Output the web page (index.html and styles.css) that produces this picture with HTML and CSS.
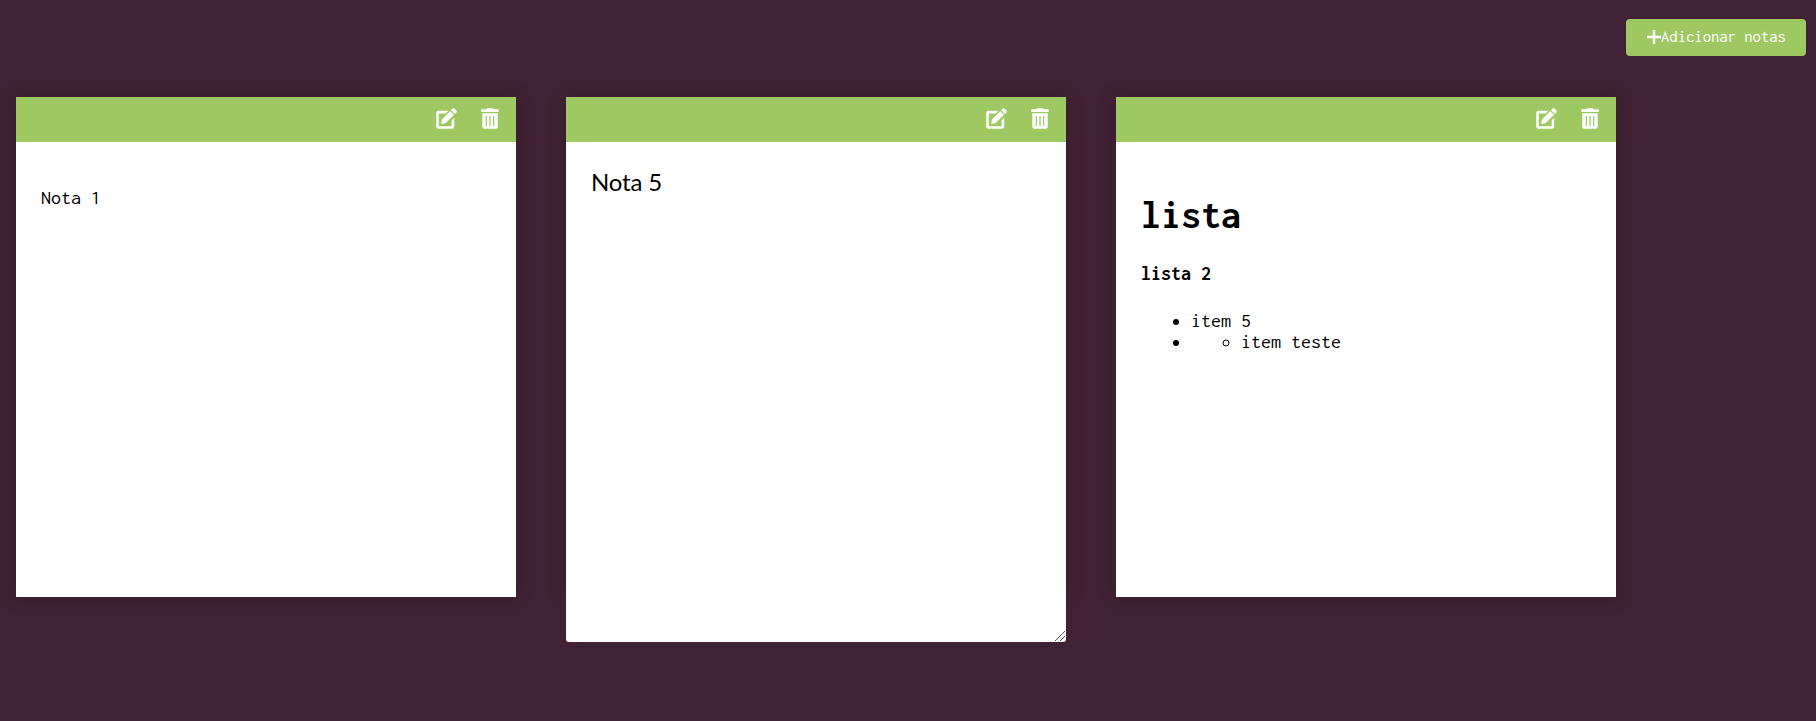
FILE: index.html
```html
<!DOCTYPE html>
<html lang="pt-BR">
<head>
<meta charset="utf-8">
<title>Notas</title>
<link rel="stylesheet" href="styles.css">
</head>
<body>
<svg class="sprite" aria-hidden="true">
  <symbol id="edit" viewBox="0 0 21 21">
    <path d="M12.200 2.800H2.500A2.300 2.300 0 0 0 .2 5.100v13.400a2.300 2.300 0 0 0 2.300 2.300h13.400a2.300 2.300 0 0 0 2.300-2.300V9.800l-2.600 2.600V18.200H2.800V5.400h6.800z"/>
    <path d="M14.200 2.900 18 6.700 9.400 15.200 5.200 16l.7-4.600zM15 2.100l1.500-1.500q1-.8 2 0l1.900 1.900q.8 1 0 2L18.900 6z"/>
  </symbol>
  <symbol id="trash" viewBox="0 0 18 21">
    <path fill-rule="evenodd" d="M5.400 1.300 6.200.2h5.600l.8 1.100H17q.8 0 .8.800v1.200q0 .7-.8.700H1q-.8 0-.8-.7V2.100q0-.8.8-.8zM1.300 5.200h15.400v13.500a2 2 0 0 1-2 2H3.300a2 2 0 0 1-2-2zM4.700 8v10h1.200V8zm3.700 0v10h1.200V8zm3.700 0v10h1.200V8z"/>
  </symbol>
</svg>
<button class="add"><svg class="plus" viewBox="0 0 14 14"><path d="M5.800 0h2.400v5.800H14v2.400H8.200V14H5.800V8.200H0V5.800h5.800z"/></svg>Adicionar notas</button>
<main class="notes">
  <section class="note">
    <header class="tools"><svg class="edit"><use href="#edit"/></svg><svg class="trash"><use href="#trash"/></svg></header>
    <div class="content"><p>Nota 1</p></div>
  </section>
  <section class="note">
    <header class="tools"><svg class="edit"><use href="#edit"/></svg><svg class="trash"><use href="#trash"/></svg></header>
    <div class="editor-wrap">
      <textarea class="editor" spellcheck="false">Nota 5</textarea>
      <svg class="grip" viewBox="0 0 10 10"><path d="M0 10 10 0M5 10l5-5"/></svg>
    </div>
  </section>
  <section class="note">
    <header class="tools"><svg class="edit"><use href="#edit"/></svg><svg class="trash"><use href="#trash"/></svg></header>
    <div class="content">
      <h1>lista</h1>
      <h4>lista 2</h4>
      <ul><li>item 5</li><li><ul><li>item teste</li></ul></li></ul>
    </div>
  </section>
</main>
</body>
</html>
```
FILE: styles.css
```css
* { box-sizing: border-box; }
body {
  margin: 0;
  padding-top: 19px;
  height: 721px;
  overflow: hidden;
  background: #412234;
  color: #000;
  font: 20px/21px Inconsolata, "Liberation Mono", monospace;
}
.sprite { display: none; }
.add {
  display: flex;
  align-items: center;
  width: 180px;
  height: 37px;
  margin: 0 10px 41px auto;
  padding: 0 0 1px 21px;
  border: 0;
  border-radius: 4px;
  background: #9ec862;
  color: #fff;
  font: 16.67px/18px Inconsolata, "Liberation Mono", monospace;
  white-space: nowrap;
}
.plus { width: 14px; height: 14px; flex: none; fill: #fff; }
.notes { display: flex; align-items: flex-start; gap: 50px; padding-left: 16px; }
.note {
  width: 500px;
  height: 500px;
  background: #fff;
  box-shadow: 0 0 15px 4px rgba(0, 0, 0, .1);
}
.tools {
  display: flex;
  justify-content: flex-end;
  align-items: center;
  gap: 24px;
  height: 45px;
  padding: 0 17px 2px 0;
  background: #9ec862;
  fill: #fff;
}
.edit { width: 21px; height: 21px; }
.trash { width: 18px; height: 21px; }
.content { padding: 25px; }
.content p { margin: 20px 0; }
.content h1 { margin: 26.8px 0; font-size: 40px; line-height: 42px; }
.content h4 { margin: 26.6px 0; }
.content ul { margin: 20px 0; padding-left: 50px; }
.content ul ul { margin: 0; }
.editor-wrap { position: relative; }
.editor {
  display: block;
  width: 500px;
  height: 500px;
  padding: 25px;
  border: 0;
  border-radius: 0 0 3px 3px;
  outline: 0;
  resize: none;
  background: #fff;
  color: #000;
  font: 24px Lato, sans-serif;
  letter-spacing: -.15px;
}
.grip {
  position: absolute;
  right: 1px;
  bottom: 1px;
  width: 10px;
  height: 10px;
  fill: none;
  stroke: #555;
  stroke-width: 1;
}
```
